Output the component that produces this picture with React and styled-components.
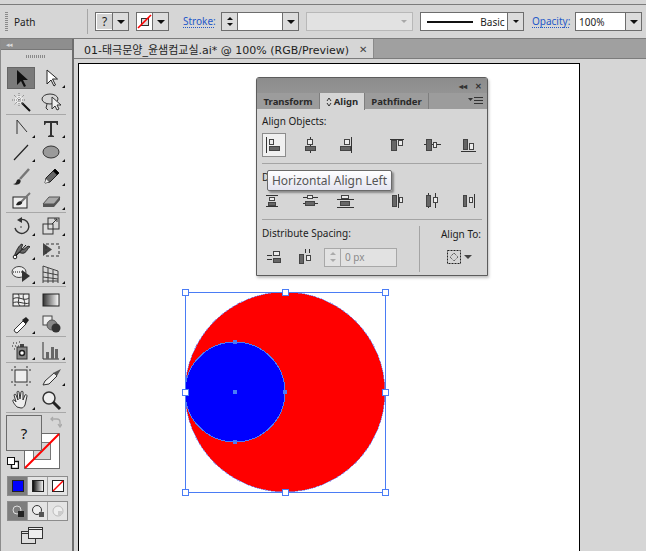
import React from 'react'
import styled, { createGlobalStyle } from 'styled-components'

const Global = createGlobalStyle`
  html, body { margin: 0; padding: 0; background: #d6d6d6; }
  body { font-family: "Noto Sans", "Noto Sans CJK KR", sans-serif; }
  * { box-sizing: border-box; }
`

const Page = styled.div`
  width: 646px;
  height: 551px;
  overflow: hidden;
  display: flex;
  flex-direction: column;
  background: #d6d6d6;
`

const TopStrip = styled.div`
  height: 5px;
  flex: none;
  background: #d6d6d6;
  border-bottom: 1px solid #7c7c7c;
`

const ControlBar = styled.div`
  height: 34px;
  flex: none;
  display: flex;
  align-items: center;
  padding: 0 4px 0 5px;
  border-bottom: 1px solid #7c7c7c;
  font-size: 10px;
  color: #1c1c1c;
  & > * { flex: none; }
`

const Grip = styled.div`
  width: 3px;
  height: 20px;
  background: repeating-linear-gradient(to bottom, #8a8a8a 0 1px, transparent 1px 2px);
`

const PathLabel = styled.span`
  margin-left: 6px;
  width: 73px;
`

const BarSep = styled.div`
  width: 1px;
  height: 25px;
  background: #a6a6a6;
  margin-right: 7px;
`

const Field = styled.div`
  display: flex;
  height: 19px;
  margin-left: ${p => p.$ml || 0}px;
  border: 1px solid #6d6d6d;
  background: #fff;
`

const Swatch = styled.div`
  width: ${p => p.$w}px;
  display: flex;
  align-items: center;
  justify-content: ${p => (p.$left ? 'flex-start' : 'center')};
  padding-left: ${p => (p.$left ? 3 : 0)}px;
`

const QuestionSwatch = styled(Swatch)`
  margin: 1px 0 1px 1px;
  background: #d4d4d4;
  width: 15px;
  font-size: 12px;
`

const Drop = styled.div`
  width: 16px;
  display: flex;
  align-items: center;
  justify-content: center;
  background: #dcdcdc;
  border-left: 1px solid #6d6d6d;
`

const Caret = styled.div`
  width: 0;
  height: 0;
  border-left: ${p => p.$s || 4}px solid transparent;
  border-right: ${p => p.$s || 4}px solid transparent;
  border-top: ${p => p.$s || 4}px solid ${p => p.$c || '#111'};
`

const LinkLabel = styled.span`
  margin-left: ${p => p.$ml}px;
  width: ${p => p.$w}px;
  color: #2458c8;
  border-bottom: 1px dotted #2458c8;
  line-height: 11px;
  font-size: 10px;
`

const Spinner = styled.div`
  width: 16px;
  display: flex;
  flex-direction: column;
  align-items: center;
  justify-content: space-evenly;
  background: #dcdcdc;
  border-right: 1px solid #6d6d6d;
`

const UpCaret = styled(Caret)`
  transform: rotate(180deg);
`

const DisabledSelect = styled.div`
  width: 107px;
  height: 19px;
  margin-left: 7px;
  display: flex;
  align-items: center;
  justify-content: flex-end;
  padding-right: 5px;
  background: #e2e2e2;
  border: 1px solid #b8b8b8;
`

const LineSample = styled.div`
  width: 46px;
  height: 2px;
  background: #111;
  margin: 0 5px 0 6px;
  align-self: center;
`

const Workspace = styled.div`
  flex: 1;
  display: flex;
  min-height: 0;
`

const ToolPanel = styled.div`
  width: 74px;
  flex: none;
  background: #d6d6d6;
  border-left: 1px solid #8c8c8c;
  border-right: 2px solid #6e6e6e;
`

const ToolHeader = styled.div`
  height: 11px;
  background: #8e8e8e;
  border-bottom: 1px solid #777;
  display: flex;
  align-items: center;
  padding-left: 5px;
  color: #d8d8d8;
  font-size: 7px;
  letter-spacing: -1px;
`

const ToolGrip = styled.div`
  width: 20px;
  height: 3px;
  margin: 5px auto 8px 25px;
  background: repeating-linear-gradient(to right, #8a8a8a 0 1px, transparent 1px 2px);
`

const ToolRow = styled.div`
  display: grid;
  grid-template-columns: 28px 30px;
  column-gap: 2px;
  padding-left: 6px;
  height: 24px;
  align-items: center;
`

const ToolCell = styled.div`
  position: relative;
  width: 28px;
  height: 22px;
  display: flex;
  align-items: center;
  justify-content: center;
  background: ${p => (p.$active ? '#7a7a7a' : 'transparent')};
  border: 1px solid ${p => (p.$active ? '#666' : 'transparent')};

  ${p => p.$more && `
    &::after {
      content: '';
      position: absolute;
      right: -1px;
      bottom: 0;
      border-left: 3px solid transparent;
      border-bottom: 3px solid #111;
    }
  `}
`

const ToolSep = styled.div`
  height: 1px;
  margin: 0 6px 1px 5px;
  background: #a8a8a8;
`

const ColorArea = styled.div`
  position: relative;
  height: 58px;
  margin-top: 2px;
`

const FillBox = styled.div`
  position: absolute;
  left: 5px;
  top: 0;
  width: 36px;
  height: 36px;
  z-index: 2;
  display: flex;
  align-items: center;
  justify-content: center;
  background: #d6d6d6;
  border: 1px solid #6c6c6c;
  font-size: 15px;
  color: #111;
`

const StrokeBox = styled.svg`
  position: absolute;
  left: 23px;
  top: 18px;
`

const SwapIcon = styled.svg`
  position: absolute;
  left: 49px;
  top: 1px;
`

const DefaultIcon = styled.svg`
  position: absolute;
  left: 6px;
  top: 42px;
`

const ModeGroup = styled.div`
  display: flex;
  width: 61px;
  height: 20px;
  margin: ${p => p.$mt}px 0 0 6px;
  border: 1px solid #8c8c8c;
`

const ModeButton = styled.div`
  flex: 1;
  display: flex;
  align-items: center;
  justify-content: center;
  background: ${p => (p.$on ? '#7e7e7e' : '#e4e4e4')};
  border-left: ${p => (p.$first ? 'none' : '1px solid #a0a0a0')};
`

const ScreenMode = styled.div`
  display: flex;
  justify-content: center;
  margin: 6px 9px 0 0;
`

const DocArea = styled.div`
  flex: 1;
  display: flex;
  flex-direction: column;
  min-width: 0;
`

const TabBar = styled.div`
  height: 20px;
  flex: none;
  background: #a0a0a0;
  border-bottom: 1px solid #7c7c7c;
`

const DocTab = styled.div`
  width: 300px;
  height: 19px;
  display: flex;
  align-items: center;
  padding: 0 6px 0 10px;
  background: #d6d6d6;
  border-right: 1px solid #8a8a8a;
  font-size: 11px;
  color: #1e1e1e;
  white-space: nowrap;
`

const TabTitle = styled.span`
  flex: 1;
  font-family: "DejaVu Sans", "Noto Sans CJK KR", sans-serif;
`

const TabClose = styled.span`
  font-size: 10px;
  color: #444;
`

const Canvas = styled.div`
  flex: 1;
  padding: 4px 66px 0 4px;
  min-height: 0;
`

const Artboard = styled.div`
  position: relative;
  height: 500px;
  background: #fff;
  border: 1px solid #000;
`

const Art = styled.svg`
  position: absolute;
  left: 100px;
  top: 222px;
  shape-rendering: crispEdges;
`

const AlignPanel = styled.div`
  position: absolute;
  left: 256px;
  top: 77px;
  width: 232px;
  height: 199px;
  background: #d6d6d6;
  border: 1px solid #5c5c5c;
  border-top-left-radius: 3px;
  border-top-right-radius: 3px;
  box-shadow: 1px 2px 3px rgba(0, 0, 0, 0.25);
  font-size: 10px;
  color: #1c1c1c;
`

const TitleBar = styled.div`
  height: 15px;
  display: flex;
  align-items: center;
  justify-content: flex-end;
  gap: 8px;
  padding-right: 5px;
  background: linear-gradient(#8c8c8c, #949494);
  color: #333;
  font-size: 8px;
  font-weight: 700;
`

const TabRow = styled.div`
  height: 16px;
  display: flex;
  background: #9c9c9c;
  border-bottom: 1px solid #9c9c9c;
`

const PanelTab = styled.div`
  width: ${p => p.$w}px;
  display: flex;
  align-items: center;
  justify-content: center;
  gap: 2px;
  font-size: 9.5px;
  font-weight: 700;
  color: #2a2a2a;
  background: ${p => (p.$on ? '#d6d6d6' : 'transparent')};
  border-right: 1px solid #7e7e7e;
  height: ${p => (p.$on ? 17 : 16)}px;
`

const PanelMenu = styled.svg`
  margin: 3px 3px 0 auto;
`

const PanelBody = styled.div`
  padding: 5px 5px 0 5px;
`

const SectionLabel = styled.div`
  height: 14px;
  line-height: 14px;
`

const IconRow = styled.div`
  display: flex;
  height: 24px;
  margin-top: ${p => p.$mt || 0}px;
`

const IconGroup = styled.div`
  display: grid;
  grid-template-columns: repeat(3, 35.5px);
  & + & { margin-left: 15px; }
`

const IconButton = styled.div`
  width: 24px;
  height: 24px;
  display: flex;
  align-items: center;
  justify-content: center;
  background: ${p => (p.$hover ? '#f0f0f0' : 'transparent')};
  border: 1px solid ${p => (p.$hover ? '#8c8c8c' : 'transparent')};
`

const Rule = styled.div`
  height: 1px;
  background: #a4a4a4;
  margin: ${p => p.$mt}px 0 ${p => p.$mb}px 0;
`

const BottomSection = styled.div`
  display: flex;
  height: 46px;
`

const SpacingCol = styled.div`
  width: 158px;
  flex: none;
  border-right: 1px solid #a4a4a4;
`

const AlignToCol = styled.div`
  flex: 1;
  display: flex;
  flex-direction: column;
  align-items: flex-end;
  padding: 1px 1px 0 0;
`

const SpacingRow = styled.div`
  display: flex;
  align-items: center;
  margin-top: 5px;
  height: 24px;
`

const SmallButton = styled(IconButton)`
  margin-right: ${p => p.$mr || 0}px;
`

const PxField = styled.div`
  display: flex;
  width: 73px;
  height: 19px;
  background: #e2e2e2;
  border: 1px solid #a8a8a8;
  font-size: 10px;
  color: #8a8a8a;
  align-items: center;
`

const PxSpin = styled.div`
  width: 16px;
  height: 100%;
  display: flex;
  flex-direction: column;
  align-items: center;
  justify-content: space-evenly;
  border-right: 1px solid #a8a8a8;
  margin-right: 4px;
`

const AlignToBtn = styled.div`
  display: flex;
  align-items: center;
  gap: 3px;
  margin: 9px 9px 0 0;
`

const Tooltip = styled.div`
  position: absolute;
  left: 267px;
  top: 170px;
  width: 125px;
  height: 21px;
  display: flex;
  align-items: center;
  justify-content: center;
  background: linear-gradient(#ffffff, #e4e4f0);
  border: 1px solid #6a6a6a;
  border-radius: 2px;
  box-shadow: 2px 2px 2px rgba(0, 0, 0, 0.35);
  font-size: 12px;
  color: #555;
  white-space: nowrap;
`

const Svg = ({ w = 22, h = 22, children }) => (
  <svg width={w} height={h} viewBox={`0 0 ${w} ${h}`}>{children}</svg>
)

// tool icons, drawn on a 22 grid
const tools = {
  select: <path d="M7 3v15l4-4 3 6 2-1-3-6h5z" fill="#111" />,
  direct: <path d="M7 3v14l4-4 3 6 1.5-1-3-6h5z" fill="#fff" stroke="#222" />,
  wand: <g><path d="M11 11l9 9" stroke="#111" strokeWidth="2" /><circle cx="9" cy="9" r="4" fill="#eee" /><path d="M9 2v14M2 9h14M4 4l10 10M14 4L4 14" stroke="#777" strokeDasharray="1 1" /></g>,
  lasso: <g><ellipse cx="10" cy="8" rx="8" ry="5" fill="none" stroke="#333" /><path d="M7 13l-1 4 2 2" fill="none" stroke="#333" /><path d="M12 6v12l3-3 2 4 2-1-2-4h4z" fill="#eee" stroke="#333" /></g>,
  pen: <path d="M7 3v14M7 3l10 12" fill="none" stroke="#333" />,
  type: <path d="M4 4h14v4h-1l-1-2h-4v12l2 1v1H8v-1l2-1V6H6L5 8H4z" fill="#333" />,
  line: <path d="M4 19L18 4" stroke="#222" strokeWidth="1.2" />,
  ellipse: <ellipse cx="11" cy="11" rx="8" ry="6" fill="#9a9a9a" stroke="#333" />,
  brush: <g><path d="M10 14L19 4" stroke="#777" strokeWidth="2.5" /><path d="M3 19c2 0 3-1 4-4 2-2 5 0 3 3-1 2-5 2-7 1z" fill="#222" /></g>,
  pencil: <g><path d="M5 18l1-5 9-9 4 4-9 9z" fill="#666" stroke="#222" /><path d="M14 5l4 4" stroke="#000" strokeWidth="3" /><path d="M5 18l1-4 3 3z" fill="#eee" /></g>,
  blob: <g><rect x="3" y="8" width="14" height="11" fill="#eee" stroke="#222" /><path d="M9 15L20 4" stroke="#777" strokeWidth="2" /><path d="M6 16c1-3 4-5 6-3 1 2-3 4-6 3z" fill="#222" /></g>,
  eraser: <g><path d="M3 15l6-7h11l-6 7z" fill="#aaa" stroke="#555" /><path d="M3 15v3h11l6-7v-3l-6 7z" fill="#555" /></g>,
  rotate: <g><path d="M5 13a7 7 0 1 0 4-8" fill="none" stroke="#333" strokeWidth="1.4" /><path d="M12 2v6l-5-3z" fill="#333" /><circle cx="11" cy="12" r="0.8" fill="#333" /></g>,
  scale: <g><rect x="3" y="9" width="10" height="10" fill="#ddd" stroke="#333" /><rect x="8" y="3" width="11" height="11" fill="none" stroke="#333" /><path d="M12 9l5-5M14 4h3v3" fill="none" stroke="#333" /></g>,
  warp: <g><path d="M4 18c2-6 5-12 8-13 2 1-2 4 0 5 3 2 5-5 8-2-2 0-3 5-6 6-3 1-5-2-7 1z" fill="#666" stroke="#222" /><circle cx="5" cy="18" r="1.8" fill="#fff" stroke="#222" /><path d="M6 17L16 6" stroke="#111" /></g>,
  free: <g><path d="M3 4v13l9-6.5z" fill="#444" /><rect x="6" y="5" width="13" height="12" fill="none" stroke="#333" strokeDasharray="3 2" /></g>,
  shape: <g><ellipse cx="9" cy="9" rx="7" ry="5.5" fill="#eee" stroke="#444" /><path d="M3 9h10" stroke="#111" strokeDasharray="1 1" /><path d="M12 7v12l8-6z" fill="#333" /></g>,
  grid: <path d="M3 20V3l15 5M8 20V5M13 20V7M18 20V8M3 9l15 3M3 14l15 2M3 18h15" fill="none" stroke="#333" strokeWidth="0.9" />,
  mesh: <g><rect x="3" y="5" width="16" height="12" fill="#eee" stroke="#222" /><path d="M3 10c5-4 11 3 16-1M3 14c4-3 12 2 16 0M8 5c3 3-2 8 2 12M14 5c-3 4 3 8 0 12" fill="none" stroke="#333" /></g>,
  gradient: <g><defs><linearGradient id="tg"><stop offset="0" stopColor="#333" /><stop offset="1" stopColor="#fff" /></linearGradient></defs><rect x="3" y="5" width="16" height="12" fill="url(#tg)" stroke="#222" /></g>,
  dropper: <g><path d="M5 19l-1-2 9-9 3 3-9 9z" fill="#fff" stroke="#333" /><path d="M12 7l4-3 3 3-3 4z" fill="#222" /></g>,
  blend: <g><rect x="3" y="3" width="9" height="9" fill="#eee" stroke="#444" /><circle cx="12" cy="12" r="5" fill="#888" stroke="#555" /><circle cx="16" cy="15" r="4.5" fill="#333" /></g>,
  spray: <g><path d="M3 4h1M6 4h1M9 3h1M2 7h1M5 7h1M8 7h1M4 10h1M7 10h1" stroke="#222" /><rect x="10" y="5" width="4" height="3" fill="#444" /><rect x="7" y="8" width="10" height="12" fill="#888" stroke="#333" /><circle cx="12" cy="14" r="2.5" fill="#fff" stroke="#222" strokeWidth="1.5" /></g>,
  graph: <g><path d="M3 3v17h16" fill="none" stroke="#333" /><rect x="6" y="13" width="3" height="7" fill="#666" /><rect x="11" y="8" width="3" height="12" fill="#666" /><rect x="15" y="10" width="3" height="10" fill="#666" /></g>,
  artboard: <g><rect x="5" y="5" width="12" height="12" fill="#eee" stroke="#333" /><path d="M5 1v2M17 1v2M5 19v2M17 19v2M1 5h2M1 17h2M19 5h2M19 17h2" stroke="#333" /></g>,
  slice: <g><path d="M3 20l2-4 9-8 3 3-8 8z" fill="#eee" stroke="#333" /><path d="M13 8l8-4-4 7z" fill="#555" /></g>,
  hand: <path d="M7 18c-2-2-5-6-4-7 1-1 3 2 3 2L4 6c0-1 2-1 2 0l2 5-1-8c0-1 2-1 2 0l1 7 1-7c0-1 2-1 2 0v8l2-5c1-1 2 0 2 1l-2 9c-1 2-2 3-4 3z" fill="#eee" stroke="#333" />,
  zoom: <g><circle cx="9" cy="9" r="6" fill="#eee" stroke="#333" strokeWidth="1.5" /><path d="M13 13l7 7" stroke="#222" strokeWidth="3" /></g>,
}

const toolRows = [
  [['select', false, true], ['direct', true]],
  [['wand'], ['lasso']],
  'sep',
  [['pen', true], ['type', true]],
  [['line', true], ['ellipse', true]],
  [['brush'], ['pencil', true]],
  [['blob'], ['eraser', true]],
  'sep',
  [['rotate', true], ['scale', true]],
  [['warp', true], ['free']],
  [['shape', true], ['grid', true]],
  'sep',
  [['mesh'], ['gradient']],
  [['dropper', true], ['blend']],
  'sep',
  [['spray', true], ['graph', true]],
  'sep',
  [['artboard'], ['slice', true]],
  [['hand', true], ['zoom']],
  'sep',
]

// align icons: rects are [x, y, w, h, filled]
const Bars = ({ rects, lines }) => (
  <Svg w={20} h={20}>
    {lines.map((l, i) => (
      <path key={i} d={l} stroke="#333" fill="none" shapeRendering="crispEdges" />
    ))}
    {rects.map(([x, y, w, h, solid], i) => (
      <rect
        key={i}
        x={x + 0.5}
        y={y + 0.5}
        width={w - 1}
        height={h - 1}
        fill={solid ? '#666' : '#ececec'}
        stroke="#444"
        shapeRendering="crispEdges"
      />
    ))}
  </Svg>
)

const alignIcons = [
  { lines: ['M2.5 2v16'], rects: [[5, 4, 5, 6], [5, 11, 11, 5, true]] },
  { lines: ['M10.5 2v16'], rects: [[7, 4, 6, 6], [5, 11, 11, 5, true]] },
  { lines: ['M16.5 2v16'], rects: [[9, 4, 6, 6], [5, 11, 11, 5, true]] },
  { lines: ['M4 4.5h14'], rects: [[5, 5, 6, 11, true], [12, 5, 5, 6]] },
  { lines: ['M3 9.5h17'], rects: [[5, 4, 6, 12, true], [12, 7, 4, 6]] },
  { lines: ['M4 16.5h15'], rects: [[6, 4, 5, 11, true], [12, 8, 5, 7]] },
]

const distIcons = [
  { lines: ['M2 5.5h12M2 16.5h12'], rects: [[5, 7, 6, 4], [4, 12, 8, 4, true]] },
  { lines: ['M3 7.5h15M3 13.5h15'], rects: [[7, 5, 6, 4], [5, 11, 10, 5, true]] },
  { lines: ['M2 9.5h17M2 17.5h17'], rects: [[6, 5, 8, 4], [5, 11, 10, 5, true]] },
  { lines: ['M12.5 4v14'], rects: [[6, 5, 5, 12, true], [13, 7, 4, 6]] },
  { lines: ['M7.5 3v15M14.5 3v15'], rects: [[5, 5, 5, 12, true], [12, 7, 5, 6]] },
  { lines: ['M17.5 4v14'], rects: [[6, 5, 4, 12, true], [12, 7, 4, 6]] },
]

const StrokeSwatch = () => (
  <Svg w={15} h={15}>
    <rect x="4.5" y="4.5" width="7" height="7" fill="#ddd" stroke="#333" />
    <path d="M1 14L14 1" stroke="#f00" strokeWidth="1.6" />
  </Svg>
)

const Handle = ({ x, y }) => (
  <rect x={x - 3} y={y - 3} width="6" height="6" fill="#fff" stroke="#4a7cf5" />
)

const Dot = ({ x, y }) => <rect x={x - 2} y={y - 2} width="4" height="4" fill="#4a7cf5" />

const ToolIcons = () =>
  toolRows.map((row, i) =>
    row === 'sep' ? (
      <ToolSep key={i} />
    ) : (
      <ToolRow key={i}>
        {row.map(([name, more, active]) => (
          <ToolCell key={name} $more={more} $active={active}>
            <Svg>{tools[name]}</Svg>
          </ToolCell>
        ))}
      </ToolRow>
    )
  )

const App = () => {
  return (
    <Page>
      <Global />
      <TopStrip />
      <ControlBar>
        <Grip />
        <PathLabel>Path</PathLabel>
        <BarSep />
        <Field>
          <QuestionSwatch $w={15}>?</QuestionSwatch>
          <Drop><Caret /></Drop>
        </Field>
        <Field $ml={7}>
          <Swatch $w={15}><StrokeSwatch /></Swatch>
          <Drop><Caret /></Drop>
        </Field>
        <LinkLabel $ml={14} $w={31}>Stroke:</LinkLabel>
        <Field $ml={7}>
          <Spinner><UpCaret $s={3} /><Caret $s={3} /></Spinner>
          <Swatch $w={44} />
          <Drop><Caret /></Drop>
        </Field>
        <DisabledSelect><Caret $s={3} $c="#a8a8a8" /></DisabledSelect>
        <Field $ml={7}>
          <LineSample />
          <Swatch $w={29}>Basic</Swatch>
          <Drop><Caret $s={3} /></Drop>
        </Field>
        <LinkLabel $ml={8} $w={37}>Opacity:</LinkLabel>
        <Field $ml={6}>
          <Swatch $w={49} $left>100%</Swatch>
          <Drop><Caret /></Drop>
        </Field>
      </ControlBar>
      <Workspace>
        <ToolPanel>
          <ToolHeader>◂◂</ToolHeader>
          <ToolGrip />
          <ToolIcons />
          <ColorArea>
            <FillBox>?</FillBox>
            <StrokeBox width="36" height="36" viewBox="0 0 36 36">
              <rect x="0.5" y="0.5" width="35" height="35" fill="#fff" stroke="#6c6c6c" />
              <rect x="9.5" y="9.5" width="17" height="17" fill="#d6d6d6" stroke="#777" />
              <path d="M1 35L35 1" stroke="#f00" strokeWidth="2" />
            </StrokeBox>
            <SwapIcon width="12" height="12" viewBox="0 0 12 12">
              <path d="M1 3h6a3 3 0 0 1 3 3v4M8 8l2 3 2-3M3 1L1 3l2 2" fill="none" stroke="#aaa" strokeWidth="1.3" />
            </SwapIcon>
            <DefaultIcon width="12" height="12" viewBox="0 0 12 12">
              <rect x="4.5" y="4.5" width="7" height="7" fill="#fff" stroke="#111" strokeWidth="1.4" />
              <rect x="0.5" y="0.5" width="7" height="7" fill="#fff" stroke="#111" />
            </DefaultIcon>
          </ColorArea>
          <ModeGroup $mt={3}>
            <ModeButton $on $first>
              <Svg w={14} h={14}><rect x="1.5" y="1.5" width="11" height="11" fill="#00f" stroke="#222" /></Svg>
            </ModeButton>
            <ModeButton>
              <Svg w={14} h={14}>
                <defs><linearGradient id="mg"><stop offset="0" stopColor="#000" /><stop offset="1" stopColor="#fff" /></linearGradient></defs>
                <rect x="1.5" y="1.5" width="11" height="11" fill="url(#mg)" stroke="#222" />
              </Svg>
            </ModeButton>
            <ModeButton>
              <Svg w={14} h={14}>
                <rect x="1.5" y="1.5" width="11" height="11" fill="#fff" stroke="#222" />
                <path d="M2 12L12 2" stroke="#f00" strokeWidth="1.4" />
              </Svg>
            </ModeButton>
          </ModeGroup>
          <ModeGroup $mt={5}>
            <ModeButton $on $first>
              <Svg w={14} h={14}><circle cx="6" cy="6" r="4" fill="none" stroke="#ddd" /><rect x="7" y="7" width="6" height="6" fill="#222" /></Svg>
            </ModeButton>
            <ModeButton>
              <Svg w={14} h={14}><circle cx="6" cy="6" r="4.5" fill="#eee" stroke="#333" /><rect x="8" y="8" width="5" height="5" fill="#555" /></Svg>
            </ModeButton>
            <ModeButton>
              <Svg w={14} h={14}><circle cx="7" cy="7" r="5" fill="#eee" stroke="#bbb" /><rect x="7" y="7" width="4" height="4" fill="#ccc" /></Svg>
            </ModeButton>
          </ModeGroup>
          <ScreenMode>
            <Svg w={22} h={17}>
              <rect x="0.5" y="4.5" width="14" height="12" fill="#ddd" stroke="#333" />
              <path d="M1 6.5h13" stroke="#333" />
              <rect x="7.5" y="0.5" width="14" height="11" fill="#eee" stroke="#333" />
              <path d="M8 2.5h13" stroke="#333" />
            </Svg>
          </ScreenMode>
        </ToolPanel>
        <DocArea>
          <TabBar>
            <DocTab>
              <TabTitle>01-태극문양_윤샘컴교실.ai* @ 100% (RGB/Preview)</TabTitle>
              <TabClose>✕</TabClose>
            </DocTab>
          </TabBar>
          <Canvas>
            <Artboard>
              <Art width="212" height="212" viewBox="179 286 212 212">
                <circle cx="285" cy="392" r="100" fill="#f00" stroke="#7d8cf0" strokeOpacity="0.6" />
                <circle cx="235" cy="392" r="50" fill="#00f" stroke="#4a7cf5" />
                <rect x="185.5" y="292.5" width="200" height="200" fill="none" stroke="#4a7cf5" />
                <Handle x={185} y={292} /><Handle x={285} y={292} /><Handle x={385} y={292} />
                <Handle x={185} y={392} /><Handle x={385} y={392} />
                <Handle x={185} y={492} /><Handle x={285} y={492} /><Handle x={385} y={492} />
                <Dot x={235} y={342} /><Dot x={235} y={442} /><Dot x={285} y={392} /><Dot x={235} y={392} />
              </Art>
            </Artboard>
          </Canvas>
        </DocArea>
      </Workspace>

      <AlignPanel>
        <TitleBar><span>◂◂</span><span>✕</span></TitleBar>
        <TabRow>
          <PanelTab $w={63}>Transform</PanelTab>
          <PanelTab $w={45} $on>
            <Svg w={6} h={10}><path d="M1 4l2-3 2 3M1 6l2 3 2-3" fill="none" stroke="#333" /></Svg>
            Align
          </PanelTab>
          <PanelTab $w={64}>Pathfinder</PanelTab>
          <PanelMenu width="16" height="9" viewBox="0 0 16 9">
            <path d="M0 2h5L2.5 5z" fill="#333" />
            <path d="M6 1.5h9M6 4.5h9M6 7.5h9" stroke="#333" />
          </PanelMenu>
        </TabRow>
        <PanelBody>
          <SectionLabel>Align Objects:</SectionLabel>
          <IconRow $mt={5}>
            <IconGroup>
              {alignIcons.slice(0, 3).map((ic, i) => (
                <IconButton key={i} $hover={i === 0}><Bars {...ic} /></IconButton>
              ))}
            </IconGroup>
            <IconGroup>
              {alignIcons.slice(3).map((ic, i) => (
                <IconButton key={i}><Bars {...ic} /></IconButton>
              ))}
            </IconGroup>
          </IconRow>
          <Rule $mt={6} $mb={6} />
          <SectionLabel>Distribute Objects:</SectionLabel>
          <IconRow $mt={4}>
            <IconGroup>
              {distIcons.slice(0, 3).map((ic, i) => (
                <IconButton key={i}><Bars {...ic} /></IconButton>
              ))}
            </IconGroup>
            <IconGroup>
              {distIcons.slice(3).map((ic, i) => (
                <IconButton key={i}><Bars {...ic} /></IconButton>
              ))}
            </IconGroup>
          </IconRow>
          <Rule $mt={7} $mb={6} />
          <BottomSection>
            <SpacingCol>
              <SectionLabel>Distribute Spacing:</SectionLabel>
              <SpacingRow>
                <SmallButton $mr={6}>
                  <Bars lines={['M3 8.5h5M3 12.5h5']} rects={[[9, 4, 7, 5], [9, 11, 8, 5, true]]} />
                </SmallButton>
                <SmallButton $mr={8}>
                  <Bars lines={['M11.5 2v4M15.5 2v4']} rects={[[5, 7, 5, 10, true], [12, 8, 5, 6]]} />
                </SmallButton>
                <PxField>
                  <PxSpin><UpCaret $s={3} $c="#aaa" /><Caret $s={3} $c="#aaa" /></PxSpin>
                  0 px
                </PxField>
              </SpacingRow>
            </SpacingCol>
            <AlignToCol>
              <SectionLabel>Align To:</SectionLabel>
              <AlignToBtn>
                <Svg w={14} h={14}>
                  <rect x="0.5" y="0.5" width="13" height="13" fill="none" stroke="#222" strokeDasharray="2 1" />
                  <path d="M7 3l4 4-4 4-4-4z" fill="none" stroke="#333" strokeDasharray="1 1" />
                </Svg>
                <Caret $s={4} $c="#444" />
              </AlignToBtn>
            </AlignToCol>
          </BottomSection>
        </PanelBody>
      </AlignPanel>
      <Tooltip>Horizontal Align Left</Tooltip>
    </Page>
  )
}

export default App
